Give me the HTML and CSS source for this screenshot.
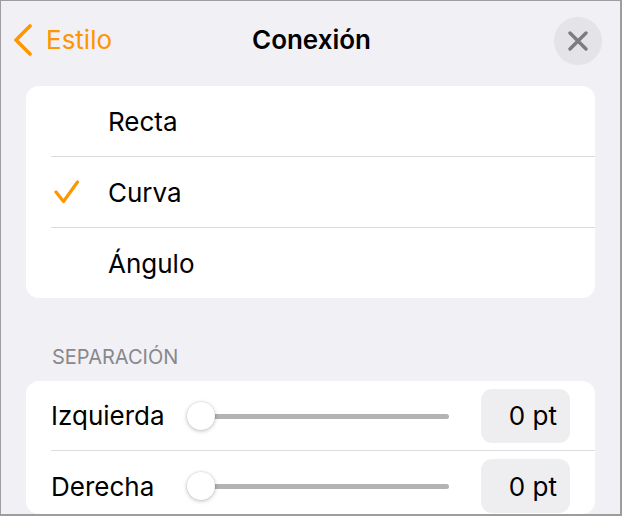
FILE: index.html
```html
<!DOCTYPE html>
<html lang="es">
<head>
<meta charset="utf-8">
<link rel="stylesheet" href="styles.css">
</head>
<body>
<div class="frame">
  <header class="nav">
    <div class="back">
      <svg class="chev" width="20" height="32" viewBox="0 0 20 32"><path d="M17 2 L3 16 L17 30" fill="none" stroke="#ff9500" stroke-width="3.6" stroke-linecap="round" stroke-linejoin="round"/></svg>
      <span class="back-text">Estilo</span>
    </div>
    <div class="title">Conexión</div>
    <div class="close">
      <svg width="20" height="20" viewBox="0 0 20 20"><path d="M2 2 L18 18 M18 2 L2 18" fill="none" stroke="#7b7b80" stroke-width="3.4" stroke-linecap="round"/></svg>
    </div>
  </header>

  <section class="card">
    <div class="opt"><span class="mark"></span><span class="opt-label">Recta</span></div>
    <div class="opt"><span class="mark"><svg width="26" height="24" viewBox="0 0 26 24"><path d="M2 12 L9.5 21.5 L23.5 2" fill="none" stroke="#ff9500" stroke-width="3.2" stroke-linecap="round" stroke-linejoin="round"/></svg></span><span class="opt-label">Curva</span></div>
    <div class="opt"><span class="mark"></span><span class="opt-label">Ángulo</span></div>
  </section>

  <div class="section-title">SEPARACIÓN</div>

  <section class="card card2">
    <div class="srow">
      <span class="slabel">Izquierda</span>
      <div class="slider"><div class="track"></div><div class="thumb"></div></div>
      <div class="value">0 pt</div>
    </div>
    <div class="srow">
      <span class="slabel">Derecha</span>
      <div class="slider"><div class="track"></div><div class="thumb"></div></div>
      <div class="value">0 pt</div>
    </div>
  </section>
</div>
</body>
</html>
```

FILE: styles.css
```css
html, body {
  margin: 0;
  padding: 0;
}
body {
  font-family: "Inter", "Liberation Sans", sans-serif;
  color: #000;
}
.frame {
  width: 622px;
  height: 516px;
  box-sizing: border-box;
  border-style: solid;
  border-color: #9d9d9f;
  border-width: 1px 2px 2px 1px;
  background: #f1f0f5;
  overflow: hidden;
}
.nav {
  height: 85px;
  display: grid;
  grid-template-columns: 1fr auto 1fr;
  align-items: center;
  padding: 0 18px 0 20px;
  box-sizing: border-box;
}
.back {
  display: flex;
  align-items: center;
  gap: 13px;
  color: #ff9500;
  font-size: 26px;
  margin-left: -8px;
  margin-top: -8px;
}
.chev { display: block; }
.title {
  font-size: 26px;
  font-weight: 600;
  margin-top: -8px;
}
.close {
  justify-self: end;
  width: 48px;
  height: 48px;
  border-radius: 50%;
  background: #e3e3e8;
  display: flex;
  align-items: center;
  justify-content: center;
  margin-top: -6px;
}
.card {
  margin: 0 25px 0 25px;
  background: #fff;
  border-radius: 13px;
  overflow: hidden;
}
.opt {
  height: 71px;
  display: flex;
  align-items: center;
  box-sizing: border-box;
  margin-left: 25px;
  border-bottom: 1px solid #dcdce0;
}
.opt:last-child { border-bottom: none; height: 70px; }
.mark {
  width: 57px;
  display: flex;
  align-items: center;
  padding-left: 3px;
  box-sizing: border-box;
}
.mark svg { display: block; }
.opt-label {
  font-size: 26px;
}
.section-title {
  color: #88888d;
  font-size: 20px;
  padding: 47px 0 0 51px;
  height: 83px;
  box-sizing: border-box;
}
.card2 {
  height: 133px;
}
.srow {
  height: 70px;
  display: flex;
  align-items: center;
  margin-left: 25px;
  padding-right: 25px;
  border-bottom: 1px solid #dcdce0;
  box-sizing: border-box;
}
.srow:last-child { border-bottom: none; }
.slabel {
  width: 136px;
  font-size: 26px;
}
.slider {
  position: relative;
  width: 262px;
  height: 30px;
}
.track {
  position: absolute;
  left: 14px;
  right: 0;
  top: 13px;
  height: 5px;
  border-radius: 3px;
  background: #b3b3b3;
}
.thumb {
  position: absolute;
  left: 0;
  top: 1px;
  width: 28px;
  height: 28px;
  border-radius: 50%;
  background: #fff;
  box-shadow: 0 1px 4px rgba(0,0,0,0.25), 0 0 0 0.5px rgba(0,0,0,0.08);
}
.value {
  margin-left: auto;
  width: 89px;
  height: 54px;
  border-radius: 11px;
  background: #eeeef0;
  display: flex;
  align-items: center;
  justify-content: flex-end;
  padding-right: 13px;
  box-sizing: border-box;
  font-size: 26px;
}
```
